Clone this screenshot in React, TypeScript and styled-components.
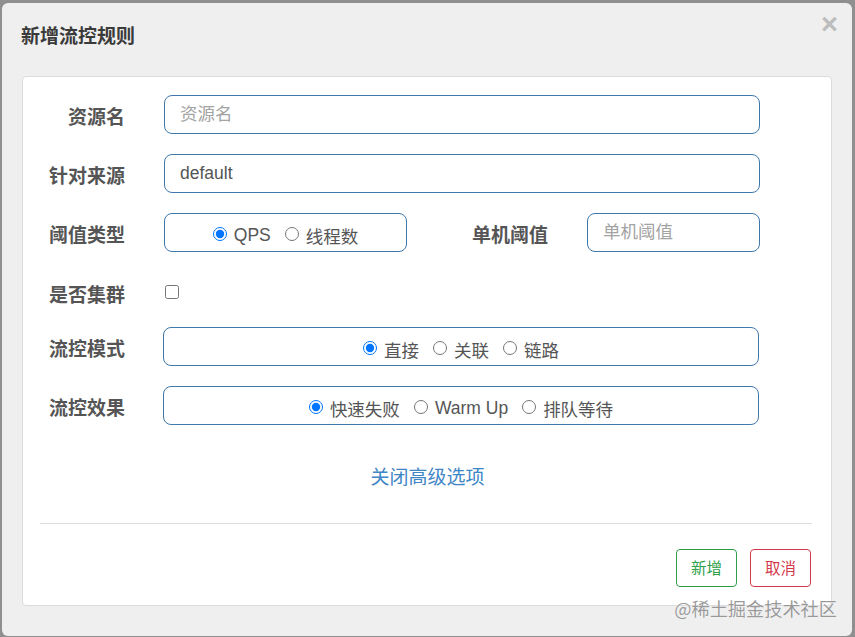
import React from "react";
import styled, { createGlobalStyle } from "styled-components";

const GlobalStyle = createGlobalStyle`
  html, body { margin: 0; padding: 0; }
  body {
    background: #8f8f8f;
    font-family: "Liberation Sans", "Noto Sans CJK SC", sans-serif;
  }
  * { box-sizing: border-box; }
`;

const Backdrop = styled.div`
  position: relative;
  width: 855px;
  height: 637px;
  padding: 3px 3px 1px 2px;
  overflow: hidden;
`;

const Dialog = styled.div`
  position: relative;
  height: 100%;
  background: #efefef;
  border-radius: 6px;
  display: flex;
  flex-direction: column;
`;

const Header = styled.div`
  height: 73px;
  padding: 19px 0 0 19px;
`;

const Title = styled.h4`
  margin: 0;
  font-family: "Noto Sans CJK SC", sans-serif;
  font-size: 19px;
  line-height: 26px;
  font-weight: 700;
  color: #3a3a3a;
`;

const Close = styled.span`
  position: absolute;
  top: 4px;
  right: 14px;
  font-family: "Liberation Sans", sans-serif;
  font-size: 29px;
  font-weight: 700;
  line-height: 34px;
  color: #bdbdbd;
`;

const Panel = styled.div`
  margin: 0 20px;
  background: #fff;
  border: 1px solid #dcdcdc;
  border-radius: 4px;
  padding: 18px 0 18px;
  display: flex;
  flex-direction: column;
`;

const Form = styled.div`
  display: flex;
  flex-direction: column;
  gap: 20px;
`;

const Row = styled.div<{ $pad?: number; $h?: number }>`
  display: flex;
  align-items: center;
  height: ${(p) => p.$h ?? 39}px;
  padding-top: ${(p) => p.$pad ?? 0}px;
`;

const Label = styled.label<{ $w: number }>`
  width: ${(p) => p.$w}px;
  margin-right: 39px;
  padding-top: 2px;
  text-align: right;
  font-family: "Noto Sans CJK SC", sans-serif;
  font-size: 19px;
  font-weight: 700;
  color: #555;
  flex-shrink: 0;
`;

const TextInput = styled.input<{ $w: number }>`
  width: ${(p) => p.$w}px;
  height: 39px;
  border: 1px solid #3f78ab;
  border-radius: 8px;
  padding: 0 15px;
  font-family: "Liberation Sans", "Noto Sans CJK SC", sans-serif;
  font-size: 17.5px;
  color: #555;
  outline: none;
  background: #fff;
  &::placeholder {
    color: #a3a3a3;
    font-family: "Noto Sans CJK SC", sans-serif;
  }
`;

const RadioBox = styled.div<{ $w: number; $shift?: number }>`
  width: ${(p) => p.$w}px;
  height: 39px;
  margin-left: ${(p) => p.$shift ?? 0}px;
  border: 1px solid #3f78ab;
  border-radius: 8px;
  display: flex;
  align-items: center;
  justify-content: center;
  gap: 14px;
  padding-top: 5px;
`;

const RadioItem = styled.label`
  display: inline-flex;
  align-items: center;
  gap: 7px;
  font-family: "Liberation Sans", "Noto Sans CJK SC", sans-serif;
  font-size: 17.5px;
  color: #555;
  input {
    margin: 0 0 3px 0;
    width: 14px;
    height: 14px;
  }
`;

const Check = styled.input`
  margin: 0 0 0 1px;
  width: 14px;
  height: 14px;
`;

const Toggle = styled.a`
  align-self: center;
  margin-top: 37px;
  font-family: "Noto Sans CJK SC", sans-serif;
  font-size: 19px;
  line-height: 28px;
  color: #3f86c6;
  text-decoration: none;
  margin-left: 1px;
`;

const Divider = styled.hr`
  margin: 33px 19px 0 17px;
  border: 0;
  border-top: 1px solid #dedede;
  height: 0;
`;

const Footer = styled.div`
  display: flex;
  justify-content: flex-end;
  gap: 13px;
  padding: 25px 20px 0 0;
`;

const Btn = styled.button<{ $c: string }>`
  height: 38px;
  padding: 0 14px;
  background: #fff;
  border: 1px solid ${(p) => p.$c};
  color: ${(p) => p.$c};
  border-radius: 4px;
  font-family: "Noto Sans CJK SC", sans-serif;
  font-size: 15.5px;
  line-height: 1;
`;

const Watermark = styled.div`
  position: absolute;
  right: 18px;
  top: 595px;
  font-family: "Noto Sans CJK SC", sans-serif;
  font-size: 18.2px;
  color: rgba(135, 135, 135, 0.85);
  text-shadow: 0 0 1px #fff;
`;

function Radio({ name, label, checked }: { name: string; label: string; checked?: boolean }) {
  return (
    <RadioItem>
      <input type="radio" name={name} defaultChecked={checked} />
      {label}
    </RadioItem>
  );
}

export default function App() {
  return (
    <>
      <GlobalStyle />
      <Backdrop>
        <Dialog>
          <Header>
            <Title>新增流控规则</Title>
          </Header>
          <Close>×</Close>
          <Panel>
            <Form>
              <Row>
                <Label $w={102}>资源名</Label>
                <TextInput $w={596} placeholder="资源名" />
              </Row>
              <Row>
                <Label $w={102}>针对来源</Label>
                <TextInput $w={596} defaultValue="default" />
              </Row>
              <Row>
                <Label $w={102}>阈值类型</Label>
                <RadioBox $w={243}>
                  <Radio name="grade" label="QPS" checked />
                  <Radio name="grade" label="线程数" />
                </RadioBox>
                <Label $w={141}>单机阈值</Label>
                <TextInput $w={173} placeholder="单机阈值" />
              </Row>
              <Row $h={35} $pad={5}>
                <Label $w={102}>是否集群</Label>
                <Check type="checkbox" />
              </Row>
              <Row>
                <Label $w={102}>流控模式</Label>
                <RadioBox $w={596} $shift={-1}>
                  <Radio name="strategy" label="直接" checked />
                  <Radio name="strategy" label="关联" />
                  <Radio name="strategy" label="链路" />
                </RadioBox>
              </Row>
              <Row>
                <Label $w={102}>流控效果</Label>
                <RadioBox $w={596} $shift={-1}>
                  <Radio name="behavior" label="快速失败" checked />
                  <Radio name="behavior" label="Warm Up" />
                  <Radio name="behavior" label="排队等待" />
                </RadioBox>
              </Row>
            </Form>
            <Toggle href="#">关闭高级选项</Toggle>
            <Divider />
            <Footer>
              <Btn $c="#2e9e48">新增</Btn>
              <Btn $c="#d2394b">取消</Btn>
            </Footer>
          </Panel>
        </Dialog>
        <Watermark>@稀土掘金技术社区</Watermark>
      </Backdrop>
    </>
  );
}
